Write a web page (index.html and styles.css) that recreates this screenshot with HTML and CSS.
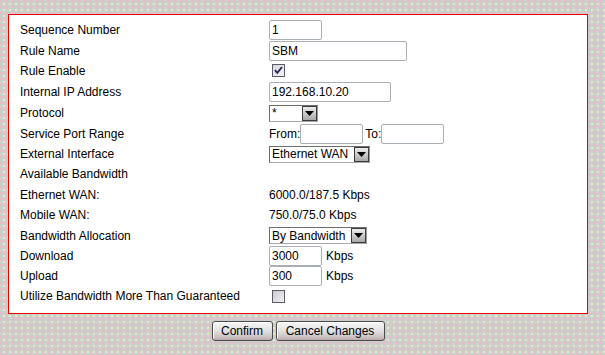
FILE: index.html
```html
<!DOCTYPE html>
<html>
<head>
<meta charset="utf-8">
<link rel="stylesheet" href="styles.css">
</head>
<body>
<div class="panel">
  <div class="form">
    <div class="lbl">Sequence Number</div>
    <div class="ctl"><span class="inp w53">1</span></div>

    <div class="lbl">Rule Name</div>
    <div class="ctl"><span class="inp w138">SBM</span></div>

    <div class="lbl">Rule Enable</div>
    <div class="ctl"><span class="cb"><svg width="13" height="13" viewBox="0 0 13 13"><defs><linearGradient id="g1" x1="0" y1="0" x2="1" y2="1"><stop offset="0" stop-color="#d6d6d6"/><stop offset="1" stop-color="#f4f4f4"/></linearGradient></defs><rect x="0.5" y="0.5" width="12" height="12" fill="url(#g1)" stroke="#5a5a6a"/><path d="M3 6.2 L5.3 8.8 L10 3" fill="none" stroke="#23236a" stroke-width="1.8"/></svg></span></div>

    <div class="lbl">Internal IP Address</div>
    <div class="ctl"><span class="inp w122">192.168.10.20</span></div>

    <div class="lbl">Protocol</div>
    <div class="ctl"><span class="sel w49"><span class="sv">*</span><span class="arrow"><svg width="9" height="5" viewBox="0 0 9 5"><path d="M0 0 H9 L4.5 5 Z" fill="#000"/></svg></span></span></div>

    <div class="lbl">Service Port Range</div>
    <div class="ctl">From:<span class="inp w63 mr2"></span>To:<span class="inp w63"></span></div>

    <div class="lbl">External Interface</div>
    <div class="ctl"><span class="sel w101"><span class="sv">Ethernet WAN</span><span class="arrow"><svg width="9" height="5" viewBox="0 0 9 5"><path d="M0 0 H9 L4.5 5 Z" fill="#000"/></svg></span></span></div>

    <div class="lbl">Available Bandwidth</div>
    <div class="ctl"></div>

    <div class="lbl">Ethernet WAN:</div>
    <div class="ctl">6000.0/187.5 Kbps</div>

    <div class="lbl">Mobile WAN:</div>
    <div class="ctl">750.0/75.0 Kbps</div>

    <div class="lbl">Bandwidth Allocation</div>
    <div class="ctl"><span class="sel w98"><span class="sv">By Bandwidth</span><span class="arrow"><svg width="9" height="5" viewBox="0 0 9 5"><path d="M0 0 H9 L4.5 5 Z" fill="#000"/></svg></span></span></div>

    <div class="lbl">Download</div>
    <div class="ctl"><span class="inp w53">3000</span><span class="unit">Kbps</span></div>

    <div class="lbl">Upload</div>
    <div class="ctl"><span class="inp w53">300</span><span class="unit">Kbps</span></div>

    <div class="lbl">Utilize Bandwidth More Than Guaranteed</div>
    <div class="ctl"><span class="cb"><svg width="13" height="13" viewBox="0 0 13 13"><defs><linearGradient id="g2" x1="0" y1="0" x2="1" y2="1"><stop offset="0" stop-color="#c8c8c8"/><stop offset="1" stop-color="#f4f4f4"/></linearGradient></defs><rect x="0.5" y="0.5" width="12" height="12" fill="url(#g2)" stroke="#5a5a6a"/></svg></span></div>
  </div>
</div>
<div class="buttons">
  <button class="btn bw61">Confirm</button>
  <button class="btn bw109">Cancel Changes</button>
</div>
</body>
</html>
```
FILE: styles.css
```css
html, body {
  margin: 0;
  padding: 0;
}
body {
  font-family: "Liberation Sans", Arial, sans-serif;
  font-size: 12px;
  color: #000;
  background-color: #cdcdcd;
  background-image:
    radial-gradient(circle at 1px 1px, #ecb9c4 0.9px, transparent 1.1px),
    radial-gradient(circle at 1px 1px, #e6ecc0 0.9px, transparent 1.1px);
  background-size: 6px 6px, 6px 6px;
  background-position: 0 0, 3px 3px;
  padding: 14px 0 0 8px;
  height: 355px;
  box-sizing: border-box;
}
.panel {
  width: 580px;
  box-sizing: border-box;
  background: #fff;
  border: 1px solid #e00000;
  padding: 5px 0 7px 11px;
}
.form {
  display: grid;
  grid-template-columns: 249px 1fr;
  grid-template-rows: 20px 21px 19px 23px 20px 21px 20px 20px 21px 20px 21px 20px 20px 20px;
}
.lbl, .ctl {
  display: flex;
  align-items: center;
  white-space: nowrap;
}
.inp {
  display: inline-flex;
  align-items: center;
  box-sizing: border-box;
  height: 20px;
  border: 1px solid #a9afb6;
  border-radius: 2px;
  padding: 0 2px;
  background: #fff;
  font-size: 12px;
}
.w53 { width: 53px; }
.w138 { width: 138px; }
.w122 { width: 122px; }
.w63 { width: 63px; }
.mr2 { margin-right: 2px; }
.unit { margin-left: 4px; }
.cb {
  display: inline-block;
  width: 13px;
  height: 13px;
  margin-left: 3px;
}
.cb svg { display: block; }
.sel {
  display: inline-flex;
  align-items: stretch;
  box-sizing: border-box;
  height: 17px;
  border: 1px solid #6e6e6e;
  border-right-color: #9a9a9a;
  border-bottom-color: #a8a8a8;
  background: #fff;
}
.w49 { width: 49px; }
.w101 { width: 101px; }
.w98 { width: 98px; }
.sv {
  flex: 1;
  display: flex;
  align-items: center;
  padding-left: 2px;
  overflow: hidden;
}
.arrow {
  width: 15px;
  box-sizing: border-box;
  border: 1px solid #3c3c3c;
  background: linear-gradient(#ececec, #c4c4c4 60%, #a8a8a8);
  display: flex;
  align-items: center;
  justify-content: center;
}
.arrow svg { display: block; }
.buttons {
  width: 580px;
  display: flex;
  justify-content: center;
  gap: 3px;
  margin-top: 7px;
}
.btn {
  font-family: "Liberation Sans", Arial, sans-serif;
  font-size: 12px;
  color: #000;
  height: 20px;
  padding: 0;
  border: 1px solid #4a4a4a;
  border-radius: 3px;
  background: linear-gradient(#f6f6f6, #e4e4e4 45%, #cfc6c6 80%, #bcaaaa);
  box-shadow: inset 1px 1px 0 #fff;
}
.bw61 { width: 61px; }
.bw109 { width: 109px; }
```
